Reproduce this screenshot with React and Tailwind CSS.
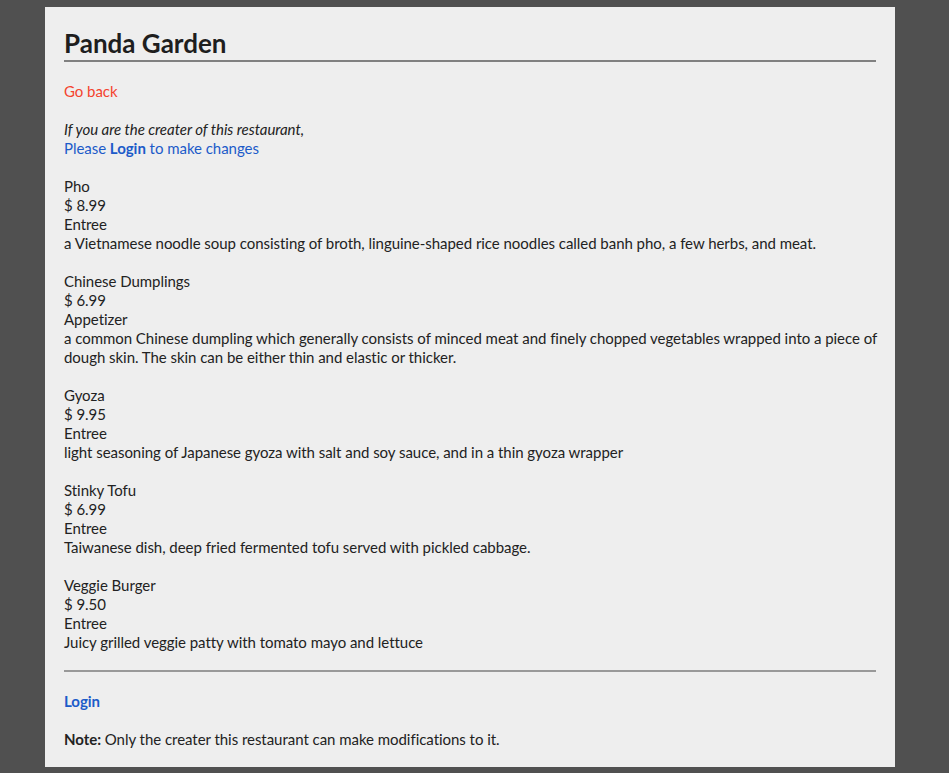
export default function App() {
  const items = [
    { name: "Pho", price: "$ 8.99", cat: "Entree", desc: ["a Vietnamese noodle soup consisting of broth, linguine-shaped rice noodles called banh pho, a few herbs, and meat."] },
    { name: "Chinese Dumplings", price: "$ 6.99", cat: "Appetizer", desc: ["a common Chinese dumpling which generally consists of minced meat and finely chopped vegetables wrapped into a piece of", "dough skin. The skin can be either thin and elastic or thicker."] },
    { name: "Gyoza", price: "$ 9.95", cat: "Entree", desc: ["light seasoning of Japanese gyoza with salt and soy sauce, and in a thin gyoza wrapper"] },
    { name: "Stinky Tofu", price: "$ 6.99", cat: "Entree", desc: ["Taiwanese dish, deep fried fermented tofu served with pickled cabbage."] },
    { name: "Veggie Burger", price: "$ 9.50", cat: "Entree", desc: ["Juicy grilled veggie patty with tomato mayo and lettuce"] },
  ];
  return (
    <div className="min-h-[773px] bg-[#505050] pt-[7px] pb-[6px]" style={{ fontFamily: "Lato, 'Open Sans', sans-serif" }}>
      <div className="ml-[45px] w-[850px] bg-[#eeeeee] px-[19px] pt-[20px] pb-[18px] text-[15px] leading-[19px] tracking-[-0.04px] text-[#222222]">
        <h1 className="border-b-2 border-[#808080] text-[26px] font-bold leading-[33px] tracking-normal text-[#1e1e1e]">Panda Garden</h1>
        <div className="mt-[20px]">
          <a className="text-[#f4442e]">Go back</a>
        </div>
        <div className="mt-[19px] italic">If you are the creater of this restaurant,</div>
        <div className="text-[#1c5bc9]">
          Please <span className="font-bold">Login</span> to make changes
        </div>
        <div className="mt-[19px] flex flex-col gap-[19px]">
          {items.map((it) => (
            <div key={it.name}>
              <div>{it.name}</div>
              <div>{it.price}</div>
              <div>{it.cat}</div>
              {it.desc.map((d, i) => (
                <div key={i} className="whitespace-nowrap">{d}</div>
              ))}
            </div>
          ))}
        </div>
        <div className="mt-[18px] h-[2px] bg-[#999999]" />
        <div className="mt-[20px] font-bold text-[#1c5bc9]">Login</div>
        <div className="mt-[19px]">
          <span className="font-bold">Note:</span> Only the creater this restaurant can make modifications to it.
        </div>
      </div>
    </div>
  );
}
